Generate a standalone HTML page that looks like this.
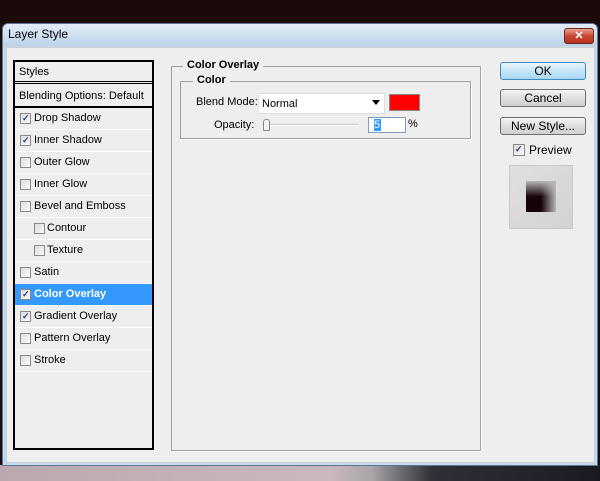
<!DOCTYPE html>
<html><head><style>
*{margin:0;padding:0;box-sizing:border-box}
body{width:600px;height:481px;overflow:hidden;background:#1a0d0f;font-family:"Liberation Sans",Tahoma,sans-serif;font-size:11px;color:#000;position:relative}
.a{position:absolute}
.cb{position:absolute;width:11px;height:11px;border:1px solid #8a8a8a;background:linear-gradient(135deg,#dcdcdc,#fafafa)}
.cb.c::after{content:"✓";position:absolute;left:1px;top:-1px;font-size:9px;line-height:10px;color:#2a3a8a;font-weight:bold}
.row{position:absolute;left:15px;width:137px;height:22px;border-bottom:1px solid #ffffff;line-height:21px}
.btn{position:absolute;left:500px;width:86px;height:18px;border:1px solid #707070;border-radius:3px;background:linear-gradient(#f4f4f4,#dedede 50%,#d0d0d0);text-align:center;font-size:12px;line-height:16px}
</style></head><body>
<div class="a" style="left:0;top:0;width:600px;height:24px;background:#1c0a0a"></div>
<div class="a" style="left:0;top:465px;width:600px;height:16px;background:linear-gradient(90deg,#b9a9ae,#c9b9bc 55%,#a8a4a8 62%,#303038 72%,#1a1a22)"></div>
<div class="a" style="left:2px;top:23px;width:596px;height:443px;border:1px solid #5a7a9a;border-radius:6px 6px 0 0;background:#c6d9ec"></div>
<div class="a" style="left:3px;top:24px;width:594px;height:22px;background:linear-gradient(#e2ecf6,#bcd2e8);border-radius:5px 5px 0 0"></div>
<div class="a" style="left:8px;top:27px;font-size:12px;color:#000">Layer Style</div>
<div class="a" style="left:564px;top:28px;width:30px;height:16px;border:1px solid #6b2a20;border-radius:3px;background:linear-gradient(#e8a090,#c84830 50%,#b83020);color:#fff;font-weight:bold;text-align:center;font-size:11px;line-height:14px">✕</div>
<div class="a" style="left:6px;top:47px;width:589px;height:416px;background:#eeeeee;border:1px solid #c8d0d8"></div>

<div class="a" style="left:13px;top:60px;width:141px;height:390px;border:2px solid #000;background:#eeeeee"></div>
<div class="a" style="left:15px;top:62px;width:137px;height:22px;border-bottom:3px double #000;line-height:20px;padding-left:4px">Styles</div>
<div class="a" style="left:15px;top:86px;width:137px;height:22px;border-bottom:2px solid #000;line-height:20px;padding-left:4px">Blending Options: Default</div>

<div class="row" style="top:108px"><span class="cb c" style="left:5px;top:5px"></span><span class="a" style="left:19px">Drop Shadow</span></div>
<div class="row" style="top:130px"><span class="cb c" style="left:5px;top:5px"></span><span class="a" style="left:19px">Inner Shadow</span></div>
<div class="row" style="top:152px"><span class="cb" style="left:5px;top:5px"></span><span class="a" style="left:19px">Outer Glow</span></div>
<div class="row" style="top:174px"><span class="cb" style="left:5px;top:5px"></span><span class="a" style="left:19px">Inner Glow</span></div>
<div class="row" style="top:196px"><span class="cb" style="left:5px;top:5px"></span><span class="a" style="left:19px">Bevel and Emboss</span></div>
<div class="row" style="top:218px"><span class="cb" style="left:19px;top:5px"></span><span class="a" style="left:32px">Contour</span></div>
<div class="row" style="top:240px"><span class="cb" style="left:19px;top:5px"></span><span class="a" style="left:32px">Texture</span></div>
<div class="row" style="top:262px"><span class="cb" style="left:5px;top:5px"></span><span class="a" style="left:19px">Satin</span></div>
<div class="row" style="top:284px;background:#3399ff;color:#fff;font-weight:bold"><span class="cb c" style="left:5px;top:5px"></span><span class="a" style="left:19px">Color Overlay</span></div>
<div class="row" style="top:306px"><span class="cb c" style="left:5px;top:5px"></span><span class="a" style="left:19px">Gradient Overlay</span></div>
<div class="row" style="top:328px"><span class="cb" style="left:5px;top:5px"></span><span class="a" style="left:19px">Pattern Overlay</span></div>
<div class="row" style="top:350px"><span class="cb" style="left:5px;top:5px"></span><span class="a" style="left:19px">Stroke</span></div>

<div class="a" style="left:171px;top:66px;width:310px;height:385px;border:1px solid #a0a0a0;box-shadow:1px 1px 0 #fff"></div>
<div class="a" style="left:183px;top:59px;padding:0 4px;background:#eee;font-weight:bold">Color Overlay</div>
<div class="a" style="left:180px;top:81px;width:291px;height:58px;border:1px solid #a0a0a0;box-shadow:1px 1px 0 #fff"></div>
<div class="a" style="left:193px;top:74px;padding:0 4px;background:#eee;font-weight:bold">Color</div>
<div class="a" style="left:196px;top:96px">Blend Mode:</div>
<div class="a" style="left:258px;top:93px;width:127px;height:21px;background:#fff;border:1px solid #ddd;padding:4px 3px">Normal<span class="a" style="right:4px;top:6px;border-left:4px solid transparent;border-right:4px solid transparent;border-top:5px solid #000"></span></div>
<div class="a" style="left:389px;top:94px;width:31px;height:17px;background:#ff0000;border:1px solid #888"></div>
<div class="a" style="left:214px;top:119px">Opacity:</div>
<div class="a" style="left:262px;top:124px;width:97px;height:2px;background:#c8c8c8;border-bottom:1px solid #fff"></div>
<div class="a" style="left:263px;top:119px;width:7px;height:12px;border:1px solid #888;border-radius:3px 3px 1px 1px;background:#f4f4f4"></div>
<div class="a" style="left:368px;top:117px;width:38px;height:16px;background:#fff;border:1px solid #7a9cc0"></div>
<div class="a" style="left:374px;top:119px;width:7px;height:12px;background:#3399ff;color:#fff;line-height:12px">5</div>
<div class="a" style="left:408px;top:118px">%</div>

<div class="btn" style="top:62px;border-color:#3c8cc8;background:linear-gradient(#eaf6fc,#c4e4f6 50%,#a8d8f2)">OK</div>
<div class="btn" style="top:89px">Cancel</div>
<div class="btn" style="top:117px">New Style...</div>
<span class="cb c" style="left:513px;top:144px;width:12px;height:12px"></span>
<div class="a" style="left:529px;top:143px;font-size:12px">Preview</div>
<div class="a" style="left:509px;top:165px;width:64px;height:64px;background:linear-gradient(135deg,#e0e0e0,#d2d2d2);border:1px solid #c8c8c8"></div>
<div class="a" style="left:526px;top:181px;width:30px;height:31px;background:linear-gradient(90deg,rgba(200,200,200,0) 50%,#b8b8b8),linear-gradient(0deg,rgba(200,200,200,0) 50%,#b8b8b8 100%),#150308"></div>
</body></html>
